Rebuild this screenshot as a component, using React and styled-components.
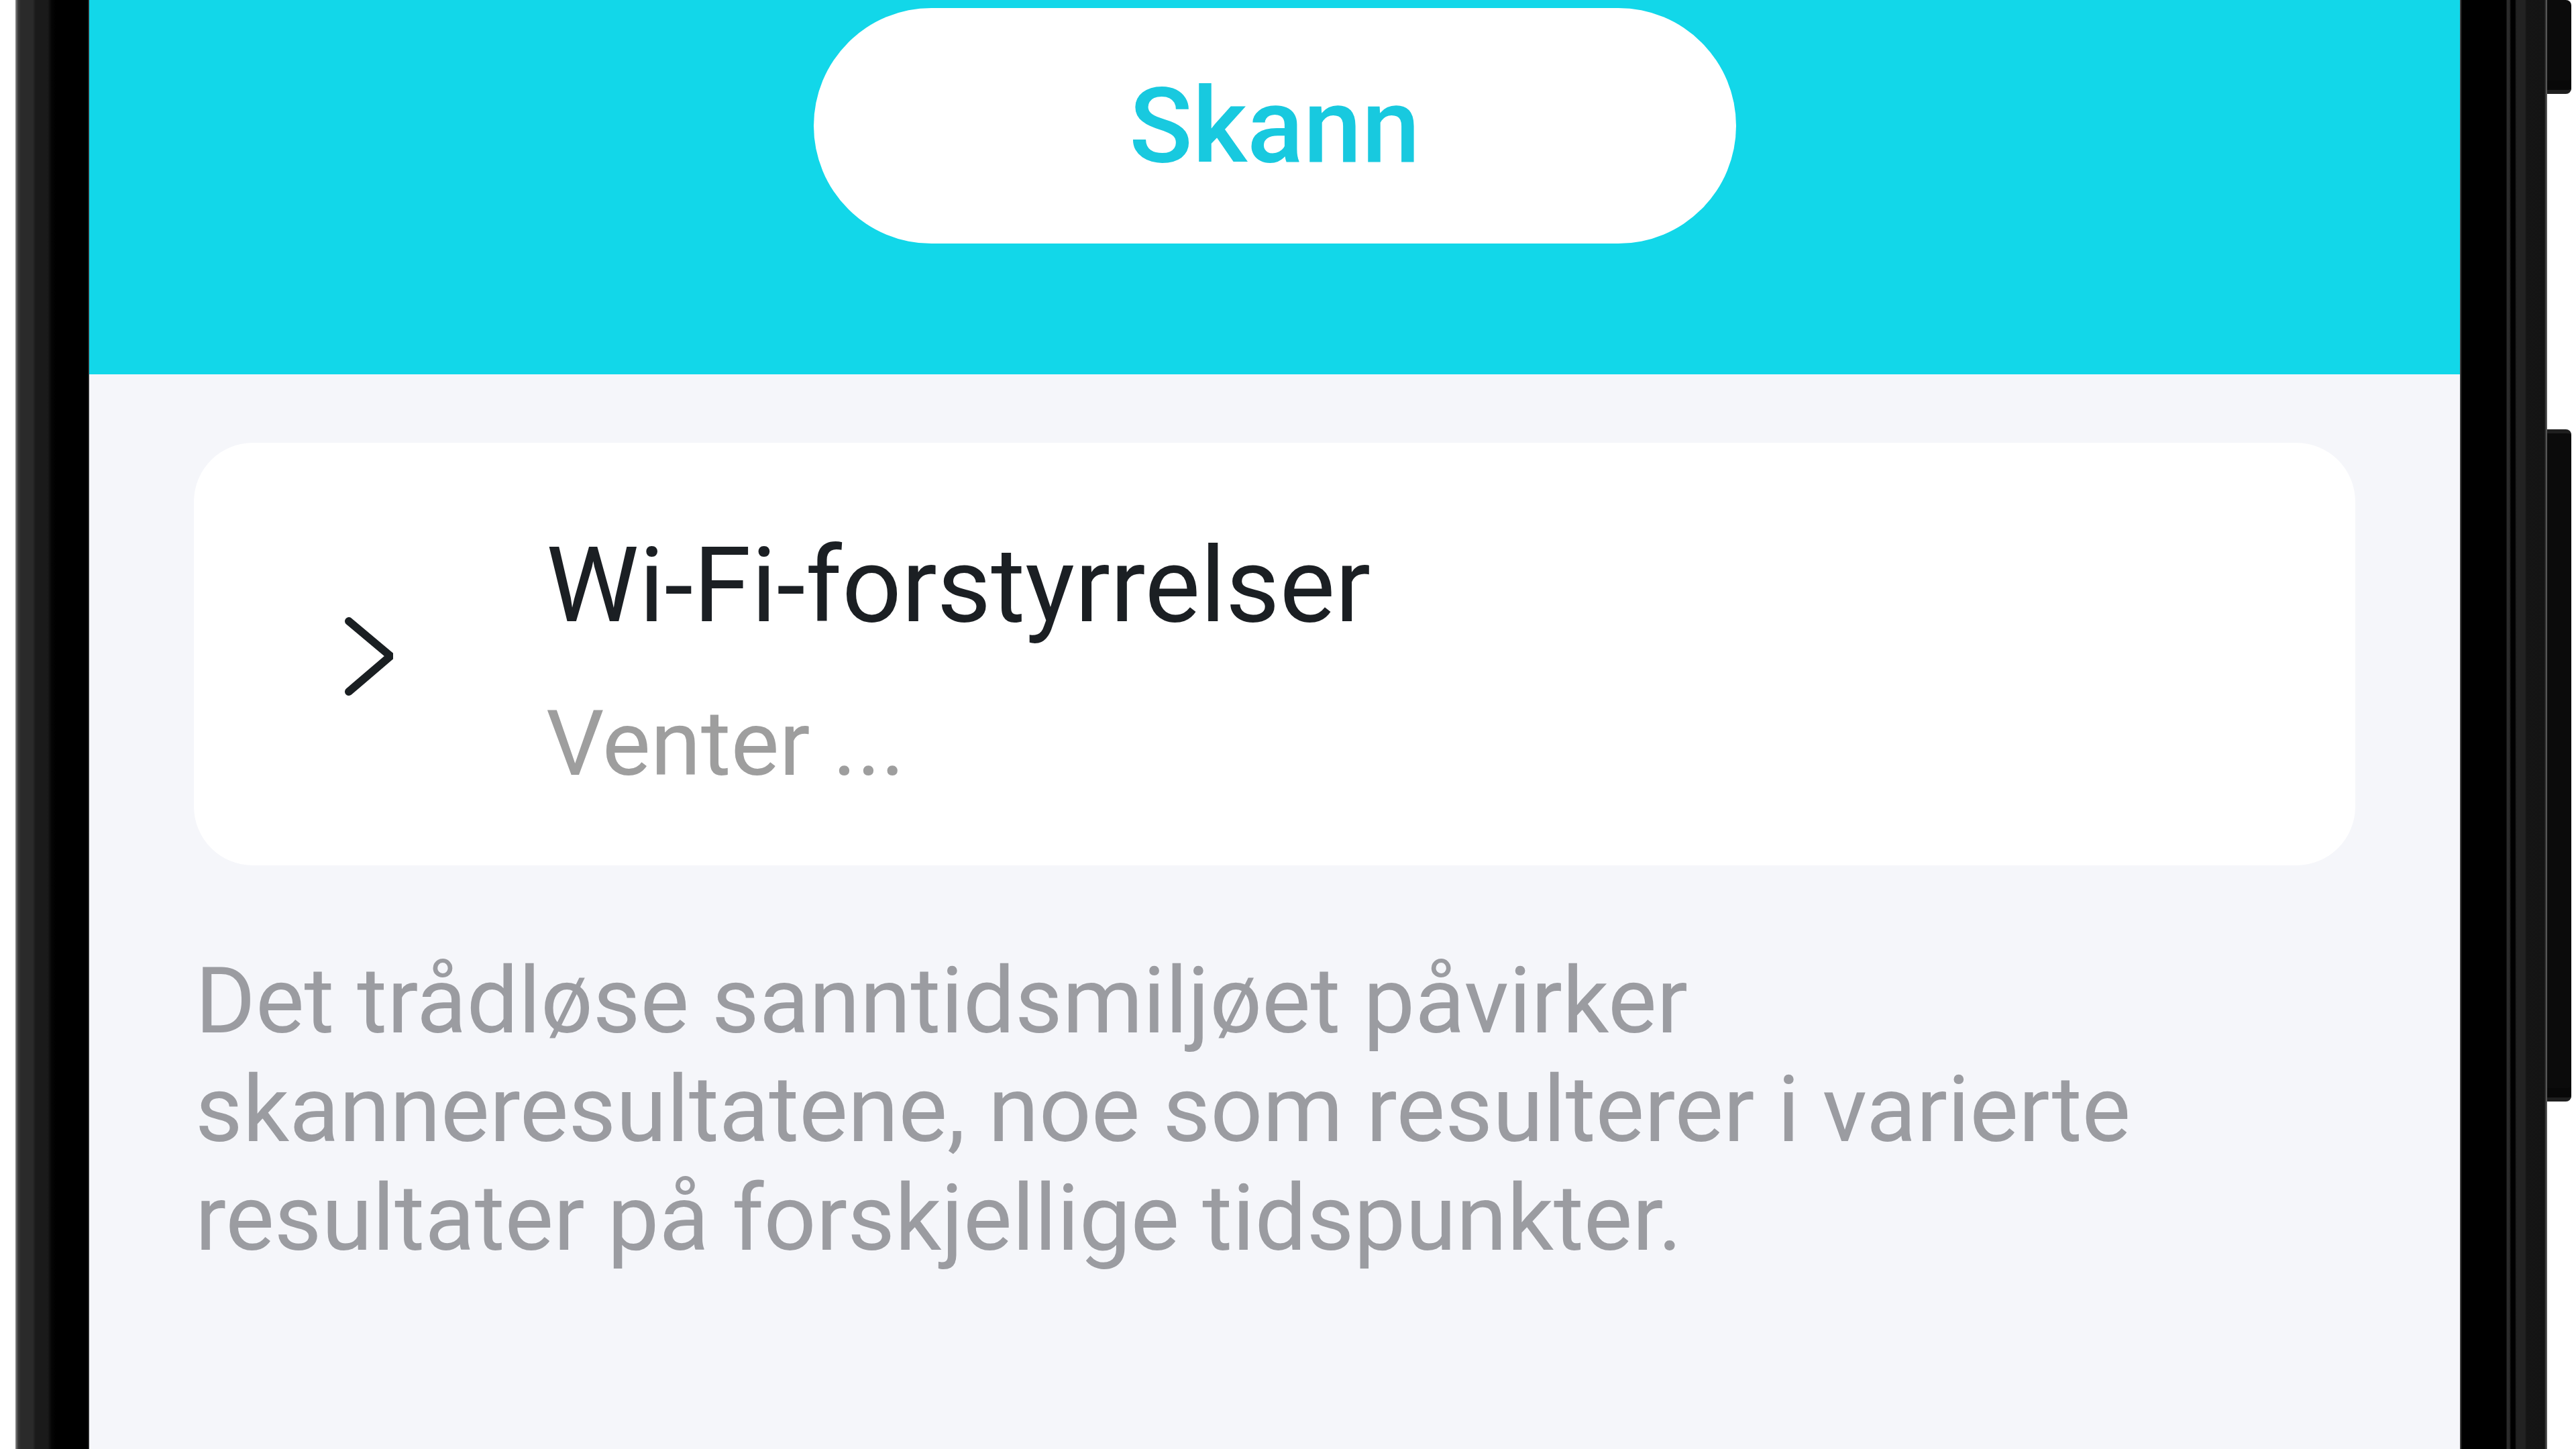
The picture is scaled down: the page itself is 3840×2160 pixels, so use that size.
import React from "react";
import styled, { createGlobalStyle } from "styled-components";

const GlobalStyle = createGlobalStyle`
  html, body {
    margin: 0;
    padding: 0;
    background: #ffffff;
    font-family: Roboto, "Noto Sans", "Liberation Sans", sans-serif;
    overflow: hidden;
  }
  * { box-sizing: border-box; }
`;

// --- device frame ---
const Device = styled.div`
  display: flex;
  width: 3840px;
  height: 2160px;
  padding-left: 23px;
  overflow: hidden;
`;

const LeftBezel = styled.div`
  width: 110px;
  height: 100%;
  background: linear-gradient(
    to right,
    #8a8a8a 0px, #3a3a3a 4px, #2a2a2a 8px, #2a2a2a 26px,
    #1a1a1a 30px, #1a1a1a 48px, #050505 54px, #000 60px, #000 108px, #555 110px
  );
`;

const RightBezel = styled.div`
  width: 130px;
  height: 100%;
  background: linear-gradient(
    to right,
    #5a5a5a 0px, #000 3px, #000 69px, #2a2a2a 70px, #2a2a2a 74px,
    #000 76px, #000 82px, #222 84px, #222 97px, #151515 99px, #141414 126px, #6a6a6a 130px
  );
`;

const SideKeys = styled.div`
  display: flex;
  flex-direction: column;
  gap: 500px;
  width: 36px;
`;

const SideKey = styled.div`
  height: ${p => p.$h}px;
  background: #0b0b0b;
  border-radius: 0 8px 8px 0;
  border-top: ${p => (p.$top ? "6px solid #1f1f1f" : "none")};
  border-bottom: 6px solid #1f1f1f;
  box-shadow: inset 0 -14px 0 #080808;
`;

// --- screen ---
const Screen = styled.div`
  width: 3534px;
  height: 100%;
  background: #f5f6fa;
  display: flex;
  flex-direction: column;
`;

const Header = styled.div`
  height: 558px;
  background: #12d7e9;
  display: flex;
  justify-content: center;
  padding-top: 12px;
`;

const ScanButton = styled.button`
  width: 1375px;
  height: 351px;
  border: none;
  border-radius: 176px;
  background: #ffffff;
  color: #18c9df;
  font-family: Roboto, "Noto Sans", sans-serif;
  font-size: 156px;
  font-weight: 500;
  cursor: pointer;
`;

const Content = styled.div`
  padding: 102px 156px 0;
  display: flex;
  flex-direction: column;
`;

const Card = styled.div`
  background: #ffffff;
  border-radius: 88px;
  display: flex;
  align-items: center;
  padding: 121px 0 99px 225px;
`;

const Chevron = styled.svg`
  width: 72px;
  height: 120px;
  flex-shrink: 0;
  margin-bottom: 14px;
`;

const TextColumn = styled.div`
  display: flex;
  flex-direction: column;
  margin-left: 228px;
`;

const Title = styled.div`
  font-size: 156px;
  line-height: 183px;
  color: #1b1f23;
`;

const Status = styled.div`
  margin-top: 63px;
  font-size: 136px;
  line-height: 164px;
  color: #9e9e9e;
`;

const Note = styled.p`
  margin: 121px 0 0;
  padding-left: 2px;
  font-size: 137px;
  line-height: 162px;
  color: #9b9ca1;
`;

export default function App() {
  return (
    <>
      <GlobalStyle />
      <Device>
        <LeftBezel />
        <Screen>
          <Header>
            <ScanButton>Skann</ScanButton>
          </Header>
          <Content>
            <Card>
              <Chevron viewBox="0 0 72 120">
                <polyline
                  points="6,7 68,59 6,112"
                  fill="none"
                  stroke="#1a1f22"
                  strokeWidth="12"
                  strokeLinecap="round"
                  strokeLinejoin="round"
                />
              </Chevron>
              <TextColumn>
                <Title>Wi-Fi-forstyrrelser</Title>
                <Status>Venter ...</Status>
              </TextColumn>
            </Card>
            <Note>
              Det trådløse sanntidsmiljøet påvirker skanneresultatene, noe som resulterer i varierte resultater på forskjellige tidspunkter.
            </Note>
          </Content>
        </Screen>
        <RightBezel />
        <SideKeys>
          <SideKey $h={140} />
          <SideKey $h={1002} $top />
        </SideKeys>
      </Device>
    </>
  );
}
